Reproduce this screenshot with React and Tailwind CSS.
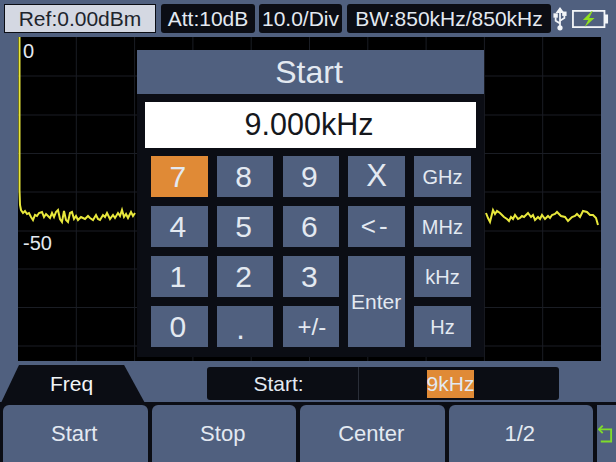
import React from "react";

const gridX = [76.3, 134.6, 192.9, 251.2, 309.5, 367.8, 426.1, 484.4, 542.7];
const gridY = [76, 115, 153.5, 192, 231, 269, 307.5, 346];

const traceLeft =
  "19.5,37 19.5,190 20,205 21,210 23,213 25,211 27,214 29,213 31,217 33,220 35,215 37,216 39,213 42,212 44,217 46,214 48,216 50,218 52,213 54,217 56,212 58,210 60,219 62,222 64,211 66,220 68,222 70,213 72,212 74,219 76,216 78,220 81,217 85,219 88,216 90,218 93,220 96,215 98,219 100,220 103,215 105,217 107,213 110,219 113,215 115,218 118,213 120,216 122,210 124,217 126,214 128,218 131,212 133,216 135,213";
const traceRight =
  "486,213 488,218 490,222 492,214 493,210 495,214 497,211 500,213 502,215 504,217 507,219 509,221 511,217 513,219 515,215 518,219 520,218 522,216 524,217 528,213 531,217 533,215 535,220 538,217 540,219 542,215 545,219 548,216 550,218 552,215 555,214 557,212 561,216 565,217 568,221 572,217 575,216 577,214 580,217 583,211 587,212 590,215 593,215 596,218 598,225";

const digit = "text-[30px] pr-[3px]";
const unit = "text-[20px]";

const keys = [
  { label: "7", size: digit, active: true },
  { label: "8", size: digit },
  { label: "9", size: digit },
  { label: "X", size: "text-[31px]" },
  { label: "GHz", size: unit },
  { label: "4", size: digit },
  { label: "5", size: digit },
  { label: "6", size: digit },
  { label: "<-", size: "text-[26px] tracking-[3px] pr-[2px]" },
  { label: "MHz", size: unit },
  { label: "1", size: digit },
  { label: "2", size: digit },
  { label: "3", size: digit },
  { label: "Enter", size: "text-[21px] row-span-2 pr-[1px]" },
  { label: "kHz", size: unit },
  { label: "0", size: digit },
  { label: ".", size: "text-[31px] pr-[9px] pt-[6px]" },
  { label: "+/-", size: "text-[24px] pl-[2px]" },
  { label: "Hz", size: unit },
];

const softKeys = ["Start", "Stop", "Center", "1/2"];

function Chip({ children, className }) {
  return (
    <div className={`h-[29px] flex items-center justify-center rounded-[3px] bg-[#0b0d14] text-[#e3e9f1] text-[21px] whitespace-nowrap ${className}`}>
      {children}
    </div>
  );
}

function UsbIcon() {
  return (
    <svg width="14" height="24" viewBox="0 0 16 26" fill="none" stroke="#f2f5f8" strokeWidth="2">
      <path d="M8 1v24" />
      <path d="M5 5l3-4 3 4z" fill="#f2f5f8" />
      <path d="M8 18l-5-3v-4" />
      <path d="M8 15l5-3V9" />
      <rect x="1.5" y="7.5" width="3" height="3" fill="#f2f5f8" />
      <rect x="11.5" y="5.5" width="3" height="3" fill="#f2f5f8" />
      <circle cx="8" cy="23" r="2" fill="#f2f5f8" />
    </svg>
  );
}

function BatteryIcon() {
  return (
    <svg width="39" height="18" viewBox="0 0 41 20">
      <rect x="1" y="1" width="35" height="18" fill="none" stroke="#f2f5f8" strokeWidth="2" />
      <rect x="36" y="5" width="4" height="10" fill="#f2f5f8" />
      <path d="M22 1L12 11h6l-4 8 11-10h-6l4-8z" fill="#8fe01e" />
    </svg>
  );
}

function ReturnIcon() {
  return (
    <svg width="15" height="20" viewBox="0 0 16 20" fill="none" stroke="#7fdc2a" strokeWidth="2">
      <path d="M5 1L1 5l4 4" />
      <path d="M1 5h13v13H3" />
    </svg>
  );
}

export default function App() {
  return (
    <div className="w-[616px] h-[462px] overflow-hidden flex flex-col bg-[#50607f] font-['Liberation_Sans',Arial,sans-serif]">
      {/* Top status bar */}
      <div className="h-[37px] flex items-start gap-[4px] pl-[4px] pt-[4px]">
        <div className="w-[152px] h-[29px] flex items-center justify-center bg-[#d4d8e2] border border-[#0b0d14] text-[#20242c] text-[21px]">
          Ref:0.00dBm
        </div>
        <Chip className="w-[94px] ml-[1px]">Att:10dB</Chip>
        <Chip className="w-[83px]">10.0/Div</Chip>
        <Chip className="w-[204px] ml-[1px]">BW:850kHz/850kHz</Chip>
        <div className="flex items-center ml-[-2px] h-[29px] gap-[4px]">
          <UsbIcon />
          <BatteryIcon />
        </div>
      </div>

      {/* Plot area */}
      <div className="relative ml-[18px] w-[583px] h-[324px] bg-black">
        <svg className="block" width="583" height="324" viewBox="18 37 583 324" fill="none">
          {gridX.map((x) => (
            <line key={x} x1={x} x2={x} y1="37" y2="361" stroke="#1a1d24" strokeWidth="1" />
          ))}
          {gridY.map((y) => (
            <line key={y} x1="18" x2="601" y1={y} y2={y} stroke="#1a1d24" strokeWidth="1" />
          ))}
          <polyline points={traceLeft} stroke="#e8e83c" strokeWidth="2" />
          <polyline points={traceRight} stroke="#e8e83c" strokeWidth="2" />
        </svg>
        <span className="absolute left-[5px] top-[4px] text-[#e3e9f1] text-[20px] leading-[20px]">0</span>
        <span className="absolute left-[5px] top-[196px] text-[#e3e9f1] text-[20px] leading-[20px]">-50</span>

        {/* Frequency keypad dialog */}
        <div className="absolute left-[119px] top-[13px] w-[347px] h-[307px] flex flex-col bg-[#0b0d14]">
          <div className="h-[44px] flex items-center justify-center pr-[3px] bg-[#50607f] text-[#e3e9f1] text-[32px]">
            Start
          </div>
          <div className="h-[46px] mt-[8px] mx-[8px] flex items-center justify-center pr-[3px] bg-white text-[#15171c] text-[30.5px]">
            9.000kHz
          </div>
          <div className="grid grid-cols-[56.6px_56.6px_56.6px_56.6px_56.6px] grid-rows-[41px_41px_41px_41px] gap-x-[9.2px] gap-y-[9px] mt-[8px] ml-[14px]">
            {keys.map((key) => (
              <div
                key={key.label}
                className={`flex items-center justify-center text-[#e3e9f1] ${key.size} ${key.active ? "bg-[#e08a36]" : "bg-[#50607f]"}`}
              >
                {key.label}
              </div>
            ))}
          </div>
        </div>
      </div>

      {/* Tab and readout */}
      <div className="relative h-[44px] flex items-start">
        <div className="absolute left-0 top-[4px] w-[146px] h-[40px] flex items-center justify-center pb-[2px] pr-[3px] bg-[#0b0d14] text-[#f2f5f8] text-[21px] [clip-path:polygon(13%_0,85%_0,100%_100%,0_100%)]">
          Freq
        </div>
        <div className="absolute left-[207px] top-[6px] w-[352px] h-[33px] flex rounded-[3px] bg-[#0b0d14] text-[#e3e9f1] text-[21px]">
          <div className="w-[152px] flex items-center justify-center pr-[8px] border-r border-[#2a2e38]">Start:</div>
          <div className="flex-1 flex items-center justify-center pr-[17px]">
            <span className="w-[47px] h-[28px] flex items-center justify-center bg-[#e08a36] whitespace-nowrap">9kHz</span>
          </div>
        </div>
        <div className="absolute left-0 right-0 bottom-0 h-[3px] bg-[#0b0d14]" />
      </div>

      {/* Softkeys */}
      <div className="flex-1 flex gap-[4px] pl-[3px] bg-[#0b0d14]">
        {softKeys.map((label) => (
          <div
            key={label}
            className="w-[144.5px] flex items-center justify-center pr-[2px] rounded-t-[6px] bg-[#50607f] text-[#e3e9f1] text-[22px]"
          >
            {label}
          </div>
        ))}
        <div className="flex-1 flex items-center justify-center bg-[#50607f] pr-[3px]">
          <ReturnIcon />
        </div>
      </div>
    </div>
  );
}
